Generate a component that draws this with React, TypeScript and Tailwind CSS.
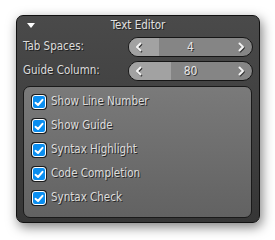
import React from 'react';

const font = { fontFamily: '"DejaVu Sans Condensed", "DejaVu Sans", Verdana, sans-serif', fontStretch: 'condensed' as const };

function Chevron({ dir }: { dir: 'left' | 'right' }) {
    const d = dir === 'left' ? 'M5.5 1.5 L2 5 L5.5 8.5' : 'M1.5 1.5 L5 5 L1.5 8.5';
    return (
        <svg width="8" height="11" viewBox="0 0 8 11" className="relative">
            <path d={d} transform="translate(0.8 1)" fill="none" stroke="#333" strokeWidth="2" strokeLinecap="round" strokeLinejoin="round" />
            <path d={d} fill="none" stroke="#f4f4f4" strokeWidth="2" strokeLinecap="round" strokeLinejoin="round" />
        </svg>
    );
}

function Spinner({ value, fill }: { value: string; fill: number }) {
    return (
        <div className="relative w-[125px] h-[20px] rounded-full border border-[#161616] bg-[#858585] overflow-hidden flex items-center px-[6px]">
            <div className="absolute left-0 top-0 bottom-0 bg-[#a2a2a2]" style={{ width: fill }} />
            <Chevron dir="left" />
            <span className="relative flex-1 text-center text-[12px] text-[#e6e6e6] [text-shadow:1px_1px_0_#333]">{value}</span>
            <Chevron dir="right" />
        </div>
    );
}

function Check({ label }: { label: string }) {
    return (
        <div className="flex items-center gap-[4px] h-[16px]">
            <div className="w-[16px] h-[16px] rounded-[4px] bg-[#1b1b1b] p-[1px]">
                <div className="w-full h-full rounded-[3px] border border-white bg-[#0a8ef0] flex items-center justify-center">
                    <svg width="10" height="9" viewBox="0 0 10 9">
                        <path d="M1.5 4.8 L4 7 L8.5 1.8" fill="none" stroke="white" strokeWidth="2" strokeLinecap="round" strokeLinejoin="round" />
                    </svg>
                </div>
            </div>
            <span className="text-[11.5px] text-[#dcdcdc] [text-shadow:1px_1px_0_#2a2a2a]">{label}</span>
        </div>
    );
}

export default function App() {
    return (
        <div className="w-[275px] h-[240px] bg-white pl-[16px] pt-[15px]" style={font}>
            <div className="w-[244px] h-[208px] rounded-[7px] border border-[#111] bg-gradient-to-b from-[#4a4a4a] to-[#363636] shadow-[2px_4px_12px_rgba(0,0,0,0.5)] flex flex-col">
                {/* Header */}
                <div className="relative h-[20px] flex items-center justify-center">
                    <div className="absolute left-[10px] top-[7px] w-0 h-0 border-l-[4px] border-r-[4px] border-t-[5px] border-l-transparent border-r-transparent border-t-white" />
                    <span className="text-[11.5px] text-[#e0e0e0] [text-shadow:1px_1px_0_#222]">Text Editor</span>
                </div>

                <div className="flex items-center justify-between pl-[6px] pr-[6px] mt-[1px]">
                    <span className="text-[11.5px] text-[#dcdcdc] [text-shadow:1px_1px_0_#222]">Tab Spaces:</span>
                    <Spinner value="4" fill={30} />
                </div>
                <div className="flex items-center justify-between pl-[6px] pr-[6px] mt-[4px]">
                    <span className="text-[11.5px] text-[#dcdcdc] [text-shadow:1px_1px_0_#222]">Guide Column:</span>
                    <Spinner value="80" fill={42} />
                </div>

                {/* Options group */}
                <div className="ml-[6px] mr-[7px] mt-[5px] h-[132px] rounded-[7px] border border-[#1a1a1a] bg-gradient-to-b from-[#7a7a7a] to-[#626262] pl-[7px] pt-[7px] flex flex-col gap-[8px]">
                    <Check label="Show Line Number" />
                    <Check label="Show Guide" />
                    <Check label="Syntax Highlight" />
                    <Check label="Code Completion" />
                    <Check label="Syntax Check" />
                </div>
            </div>
        </div>
    );
}
